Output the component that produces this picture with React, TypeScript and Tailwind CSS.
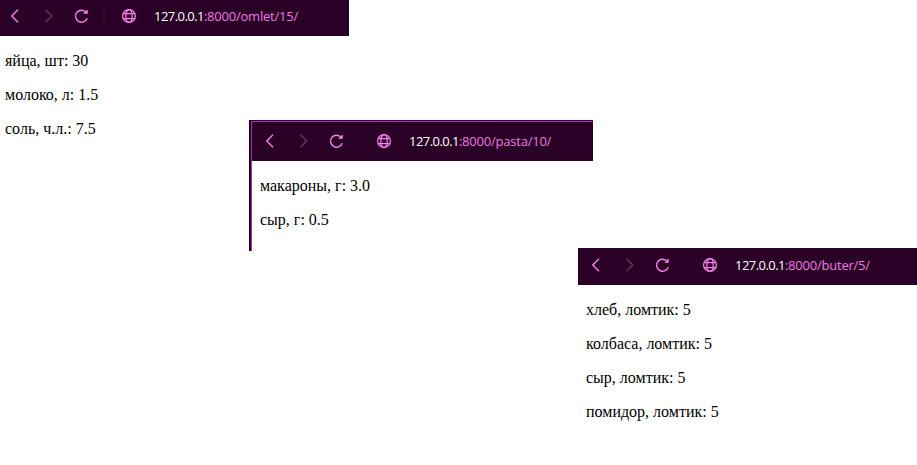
import React from "react";

function BackIcon() {
  return (
    <svg className="h-4 w-4 shrink-0" viewBox="0 0 16 16" fill="none" stroke="#fa82ee" strokeWidth="1.4">
      <path d="M11 1.8 4.8 8 11 14.2" />
    </svg>
  );
}

function ForwardIcon() {
  return (
    <svg className="ml-[18px] h-4 w-4 shrink-0" viewBox="0 0 16 16" fill="none" stroke="#6f2d6b" strokeWidth="1.4">
      <path d="M4.5 1.8 10.7 8 4.5 14.2" />
    </svg>
  );
}

function ReloadIcon() {
  return (
    <svg className="ml-[17px] h-4 w-4 shrink-0" viewBox="0 0 16 16" fill="none" stroke="#fa82ee" strokeWidth="1.4">
      <path d="M13.2 10.2A6 6 0 1 1 12.2 4.4" />
      <path d="M13.4 2v3.5H9.9z" fill="#fa82ee" strokeWidth="0.6" />
    </svg>
  );
}

function GlobeIcon() {
  return (
    <svg className="h-4 w-4 shrink-0" viewBox="0 0 16 16" fill="none" stroke="#fa82ee" strokeWidth="1.25">
      <circle cx="8" cy="8" r="6.4" />
      <ellipse cx="8" cy="8" rx="3.2" ry="6.4" />
      <path d="M2.2 5.5h11.6M2.2 10.5h11.6" />
    </svg>
  );
}

function Bar({ className, path, dots }: { className: string; path: string; dots?: boolean }) {
  return (
    <div className={`flex items-start bg-[#2a0026] ${className}`}>
      <BackIcon />
      <ForwardIcon />
      <ReloadIcon />
      <div className="flex h-4 w-[31px] shrink-0 flex-col gap-[2px] pt-[3px] pl-[13px]">
        {dots && (
          <>
            <i className="h-[2px] w-[2px] bg-[#55054f]" />
            <i className="h-[2px] w-[2px] bg-[#55054f]" />
            <i className="h-[2px] w-[2px] bg-[#55054f]" />
          </>
        )}
      </div>
      <GlobeIcon />
      <div className="ml-[17px] whitespace-nowrap font-['Open_Sans',sans-serif] text-[13px] leading-4 tracking-[-0.55px] text-[#ec7ce2]">
        <span className="text-white">127.0.0.1</span>
        <span className="tracking-[-0.22px]">{path}</span>
      </div>
    </div>
  );
}

function Lines({ items, className }: { items: string[]; className: string }) {
  return (
    <div className={`flex flex-col gap-4 ${className}`}>
      {items.map((t) => (
        <p key={t} className="whitespace-nowrap text-[16px] leading-[18px]">
          {t}
        </p>
      ))}
    </div>
  );
}

export default function App() {
  return (
    <main className="grid h-[465px] w-[917px] grid-cols-[249px_100px_229px_15px_324px] grid-rows-[120px_25px_103px_3px_214px] overflow-hidden bg-white font-['Liberation_Serif',serif] text-black">
      <section className="col-span-2 col-start-1 row-span-2 row-start-1">
        <Bar className="h-9 pt-2 pl-[7px]" path=":8000/omlet/15/" dots />
        <Lines className="pt-4 pl-[5px]" items={["яйца, шт: 30", "молоко, л: 1.5", "соль, ч.л.: 7.5"]} />
      </section>
      <section className="col-span-3 col-start-2 row-span-3 row-start-2 border-t border-l-2 border-black">
        <div className="h-full border-l border-[#ec00ec]">
          <Bar className="h-10 border-t border-[#ec00ec] pt-[11px] pl-[10px]" path=":8000/pasta/10/" />
          <Lines className="pt-4 pl-2" items={["макароны, г: 3.0", "сыр, г: 0.5"]} />
        </div>
      </section>
      <section className="col-span-2 col-start-4 row-span-2 row-start-4">
        <Bar className="h-[37px] pt-[9px] pl-[10px]" path=":8000/buter/5/" />
        <Lines
          className="pt-4 pl-2"
          items={["хлеб, ломтик: 5", "колбаса, ломтик: 5", "сыр, ломтик: 5", "помидор, ломтик: 5"]}
        />
      </section>
    </main>
  );
}
